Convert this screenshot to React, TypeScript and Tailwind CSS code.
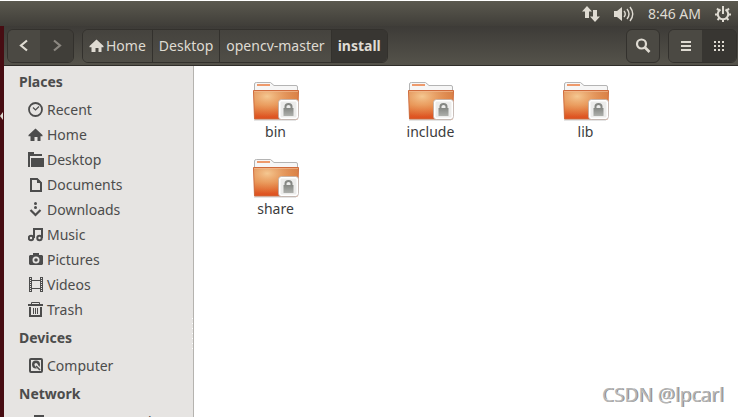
import type { ReactNode } from "react";

type Place = { label: string; icon: ReactNode };

const HomeIcon = () => (
  <svg viewBox="0 0 16 16" className="w-4 h-4" fill="currentColor">
    <path d="M7.5 1.5 .5 8v1.200h2V14h4v-4h3v4h3V9.200h2V8z" />
  </svg>
);

const places: Place[] = [
  {
    label: "Recent",
    icon: (
      <svg viewBox="0 0 16 16" className="w-4 h-4" fill="none" stroke="currentColor">
        <circle cx="7.5" cy="7.5" r="6.5" strokeWidth="1.8" />
        <path d="M5 5.5 7.5 8 11 4.5" strokeWidth="1.2" />
      </svg>
    ),
  },
  { label: "Home", icon: <HomeIcon /> },
  {
    label: "Desktop",
    icon: (
      <svg viewBox="0 0 16 16" className="w-4 h-4" fill="currentColor">
        <path d="M0 0h6v2h8v2H2v11H0z" />
        <path d="M3 5h13v10H1V6h2z" />
        <path d="M2.500 15V5.500H16" fill="none" stroke="#e6e4e2" />
      </svg>
    ),
  },
  {
    label: "Documents",
    icon: (
      <svg viewBox="0 0 16 16" className="w-4 h-4" fill="none" stroke="currentColor" strokeWidth="2">
        <path d="M3 2h6l4 4v8H3z" />
        <path d="M9 1v5h5z" fill="currentColor" stroke="none" />
      </svg>
    ),
  },
  {
    label: "Downloads",
    icon: (
      <svg viewBox="0 0 16 16" className="w-4 h-4" fill="currentColor">
        <circle cx="7.5" cy="1.5" r="1.5" />
        <circle cx="7.5" cy="5.5" r="1.5" />
        <path d="m2.5 8 5 5 5-5" fill="none" stroke="currentColor" strokeWidth="2.200" />
      </svg>
    ),
  },
  {
    label: "Music",
    icon: (
      <svg viewBox="0 0 16 16" className="w-4 h-4" fill="none" stroke="currentColor" strokeWidth="2">
        <circle cx="3" cy="11" r="2.200" />
        <circle cx="11.500" cy="11" r="2.200" />
        <path d="M6 11V2M14 11V1M5 2h9" />
      </svg>
    ),
  },
  {
    label: "Pictures",
    icon: (
      <svg viewBox="0 0 16 16" className="w-4 h-4" fill="currentColor" fillRule="evenodd">
        <path d="M5 1h6v2h3l1 1v8l-1 1H2l-1-1V4l1-1h3zM8 4.500a3.500 3.500 0 1 0 0 7 3.500 3.500 0 0 0 0-7m0 1.700a1.800 1.800 0 1 1 0 3.600 1.800 1.800 0 0 1 0-3.600" />
      </svg>
    ),
  },
  {
    label: "Videos",
    icon: (
      <svg viewBox="0 0 16 16" className="w-4 h-4" fill="none" stroke="currentColor">
        <path d="M1.5 0v15M3.5 0v15M12.5 0v15M14.5 0v15M4 3.5h8M4 11.5h8" />
        <path d="M2.5 0v15M13.5 0v15" strokeDasharray="1 1" />
      </svg>
    ),
  },
  {
    label: "Trash",
    icon: (
      <svg viewBox="0 0 16 16" className="w-4 h-4" fill="none" stroke="currentColor">
        <path d="M0 3h15" strokeWidth="2" />
        <path d="M3.500 2V.500h8V2" />
        <path d="M2 5v9h11V5" strokeWidth="2" />
        <path d="M5.5 6v6M7.5 6v6M9.5 6v6" />
      </svg>
    ),
  },
];

const devices: Place[] = [
  {
    label: "Computer",
    icon: (
      <svg viewBox="0 0 16 16" className="w-4 h-4" fill="none" stroke="currentColor">
        <rect x="2" y="1" width="12" height="13" rx="1" strokeWidth="2" />
        <circle cx="8" cy="6.500" r="2.800" strokeWidth="2.400" />
        <path d="m8 7 4 5" stroke="#e6e4e2" strokeWidth="3" />
        <path d="m8 8 4 4" strokeWidth="1.6" />
      </svg>
    ),
  },
];

const network: Place[] = [
  {
    label: "Browse Network",
    icon: (
      <svg viewBox="0 0 16 16" className="w-4 h-4" fill="none" stroke="currentColor" strokeWidth="2">
        <path d="M7 2h8v6H7zM2 8v6h8" />
      </svg>
    ),
  },
];

const folders = ["bin", "include", "lib", "share"];
const crumbs = ["Home", "Desktop", "opencv-master", "install"];

function PlaceGroup({ title, items }: { title: string; items: Place[] }) {
  return (
    <section>
      <h2 className="h-[31px] pl-[15px] pt-1 leading-6 font-bold">{title}</h2>
      <ul>
        {items.map((item) => (
          <li key={item.label}>
            <a href="#" className="flex h-[25px] items-center gap-[3px] pl-6">
              {item.icon}
              {item.label}
            </a>
          </li>
        ))}
      </ul>
    </section>
  );
}

function FolderIcon() {
  return (
    <svg viewBox="0 0 48 42" className="w-12 h-[42px]">
      <defs>
        <linearGradient id="front" x1="0" y1="0" x2="0" y2="1">
          <stop offset="0" stopColor="#d5804a" />
          <stop offset=".5" stopColor="#e0803f" />
          <stop offset="1" stopColor="#de4e1e" />
        </linearGradient>
        <radialGradient id="glow" cx=".3" cy=".2" r=".75">
          <stop offset="0" stopColor="#f8d09a" stopOpacity=".9" />
          <stop offset="1" stopColor="#f0a060" stopOpacity="0" />
        </radialGradient>
        <linearGradient id="lock" x1="0" y1="0" x2="0" y2="1">
          <stop offset="0" stopColor="#858783" />
          <stop offset="1" stopColor="#aeb0ac" />
        </linearGradient>
      </defs>
      <path d="M2.500 38.500V4q0-1.500 2-1.500h14l3.500 3h22q1.500 0 1.500 1.500v31.500z" fill="#f6f6f6" stroke="#b4b4b4" />
      <path d="M5 5h13" stroke="#ee9a6c" strokeWidth="2" />
      <path d="M1.500 10.500h45l-1 28.500h-43z" fill="url(#front)" stroke="#cf6b3c" />
      <path d="M2 11h44l-1 27H3z" fill="url(#glow)" />
      <path d="M2 11.500h44" stroke="#f3b98e" strokeOpacity=".7" />
      <path d="M2 40h42" stroke="#999" strokeOpacity=".5" />
      <rect x="27.500" y="20.500" width="18" height="18" rx="2" fill="#ececeb" stroke="#fff" strokeWidth="2" />
      <rect x="26.500" y="19.500" width="20" height="20" rx="3" fill="none" stroke="#b3aaa5" strokeOpacity=".7" />
      <path d="M33.500 29v-2.500q0-2.500 3-2.500t3 2.500V29" fill="none" stroke="#858783" strokeWidth="2" />
      <rect x="31.500" y="28" width="10" height="8" fill="url(#lock)" />
    </svg>
  );
}

function TopPanel() {
  return (
    <header className="flex h-[26px] items-center justify-end gap-[14px] border-t border-white bg-linear-to-b from-[#5b594f] to-[#403e39] pr-[7px] text-[#dfdbd2]">
      <svg viewBox="0 0 18 16" className="w-[18px] h-4" fill="currentColor">
        <path d="M5 0 0 5.500h3V12h4V5.500h3z" />
        <path d="M13 16 8 10.500h3V4h4v6.500h3z" />
      </svg>
      <svg viewBox="0 0 20 16" className="w-5 h-4" fill="none" stroke="currentColor">
        <path d="M0 5h3l5-4v14l-5-4H0z" fill="currentColor" stroke="none" />
        <path d="M10 5q2.500 3 0 6M13 3q4 5 0 10M16 1q5.500 7 0 14" strokeWidth="1.4" />
      </svg>
      <span>8:46 AM</span>
      <svg viewBox="0 0 16 16" className="w-4 h-4" fill="none" stroke="currentColor" strokeWidth="2">
        <path d="M5.500 3.500a5.200 5.200 0 1 0 5 0M8 0v8" />
        <path d="M0 8.500h3M13 8.500h3M8 13v3M2 2.500l2 2M14 2.500l-2 2M2.500 14l2-2M13.500 14l-2-2" />
      </svg>
    </header>
  );
}

function Toolbar() {
  return (
    <div className="flex h-10 items-center border-b border-[#2f2d29] bg-linear-to-b from-[#3d3b37] to-[#55534b] pl-[3px] text-[#dfdbd2]">
      <div className="flex h-[34px] overflow-hidden rounded-md border border-[#33312d]">
        <button aria-label="Back" className="grid w-8 place-items-center bg-[#4b4943]">
          <svg viewBox="0 0 16 16" className="w-4 h-4" fill="none" stroke="currentColor" strokeWidth="2.200">
            <path d="m11 2.500-6 5 6 5" />
          </svg>
        </button>
        <button aria-label="Forward" className="grid w-[33px] place-items-center bg-[#403e39] text-[#8b8780]">
          <svg viewBox="0 0 16 16" className="w-4 h-4" fill="none" stroke="currentColor" strokeWidth="2.200">
            <path d="m5 2.500 6 5-6 5" />
          </svg>
        </button>
      </div>
      <nav className="ml-2 flex h-[34px] overflow-hidden rounded-md border border-[#33312d]">
        {crumbs.map((crumb, i) => (
          <button
            key={crumb}
            className={
              i === crumbs.length - 1
                ? "bg-[#383632] px-[6px] font-bold"
                : "flex items-center gap-px border-r border-[#33312d] bg-linear-to-b from-[#45433e] to-[#504e47] px-[6px]"
            }
          >
            {i === 0 && <HomeIcon />}
            {crumb}
          </button>
        ))}
      </nav>
      <div className="ml-auto flex h-[34px] gap-2 pr-px">
        <button aria-label="Search" className="grid w-[34px] place-items-center rounded-md border border-[#33312d] bg-[#4b4943]">
          <svg viewBox="0 0 16 16" className="w-4 h-4" fill="none" stroke="currentColor">
            <circle cx="6.500" cy="6" r="4.500" strokeWidth="2.200" />
            <path d="m9.500 9 5 5" strokeWidth="2.600" />
          </svg>
        </button>
        <div className="flex overflow-hidden rounded-md border border-[#33312d]">
          <button aria-label="List view" className="grid w-[33px] place-items-center bg-[#4b4943]">
            <svg viewBox="0 0 16 16" className="w-4 h-4" stroke="currentColor" strokeWidth="2">
              <path d="M3 4h10M3 8h10M3 12h10" />
            </svg>
          </button>
          <button aria-label="Icon view" className="grid w-[34px] place-items-center bg-[#383632]">
            <svg viewBox="0 0 16 16" className="w-4 h-4" stroke="currentColor" strokeWidth="2">
              <path d="M3 4h10M3 8h10M3 12h10" strokeDasharray="2 2" />
            </svg>
          </button>
        </div>
      </div>
    </div>
  );
}

export default function App() {
  return (
    <div className="relative flex h-screen flex-col overflow-hidden bg-white font-['Noto_Sans','Open_Sans',sans-serif] text-sm text-[#4c4c4c]">
      <TopPanel />
      <div className="flex min-h-0 flex-1">
        <div className="flex w-1 shrink-0 flex-col bg-[#470c12] pt-[86px]">
          <svg viewBox="0 0 3 8" className="h-2 w-[3px]" fill="#dfdbd2">
            <path d="M3 0v8L0 4z" />
          </svg>
        </div>
        <div className="flex min-w-0 flex-1 flex-col">
          <Toolbar />
          <div className="flex min-h-0 flex-1">
            <aside className="relative flex w-[190px] shrink-0 flex-col overflow-hidden border-r border-[#b5b3af] bg-[#e6e4e2]">
              <PlaceGroup title="Places" items={places} />
              <PlaceGroup title="Devices" items={devices} />
              <PlaceGroup title="Network" items={network} />
              {/* resize grip */}
              <svg viewBox="0 0 1 32" className="absolute right-0 top-[252px] h-8 w-px" stroke="#fff">
                <path d="M.5 0v32" strokeDasharray="1 4" />
              </svg>
            </aside>
            <main className="grid flex-1 grid-cols-[repeat(auto-fill,155px)] content-start pl-1 pt-[14px] text-[#3c3c3c]">
              {folders.map((name) => (
                <a key={name} href="#" className="flex h-[77px] flex-col items-center">
                  <FolderIcon />
                  <span>{name}</span>
                </a>
              ))}
            </main>
          </div>
        </div>
      </div>
      <p className="absolute bottom-2 right-[14px] text-[19px] leading-7 text-[#b4b4b4] [text-shadow:-1px_-1px_0_#fff,1px_0_0_#8c8c8c]">
        CSDN @lpcarl
      </p>
    </div>
  );
}
